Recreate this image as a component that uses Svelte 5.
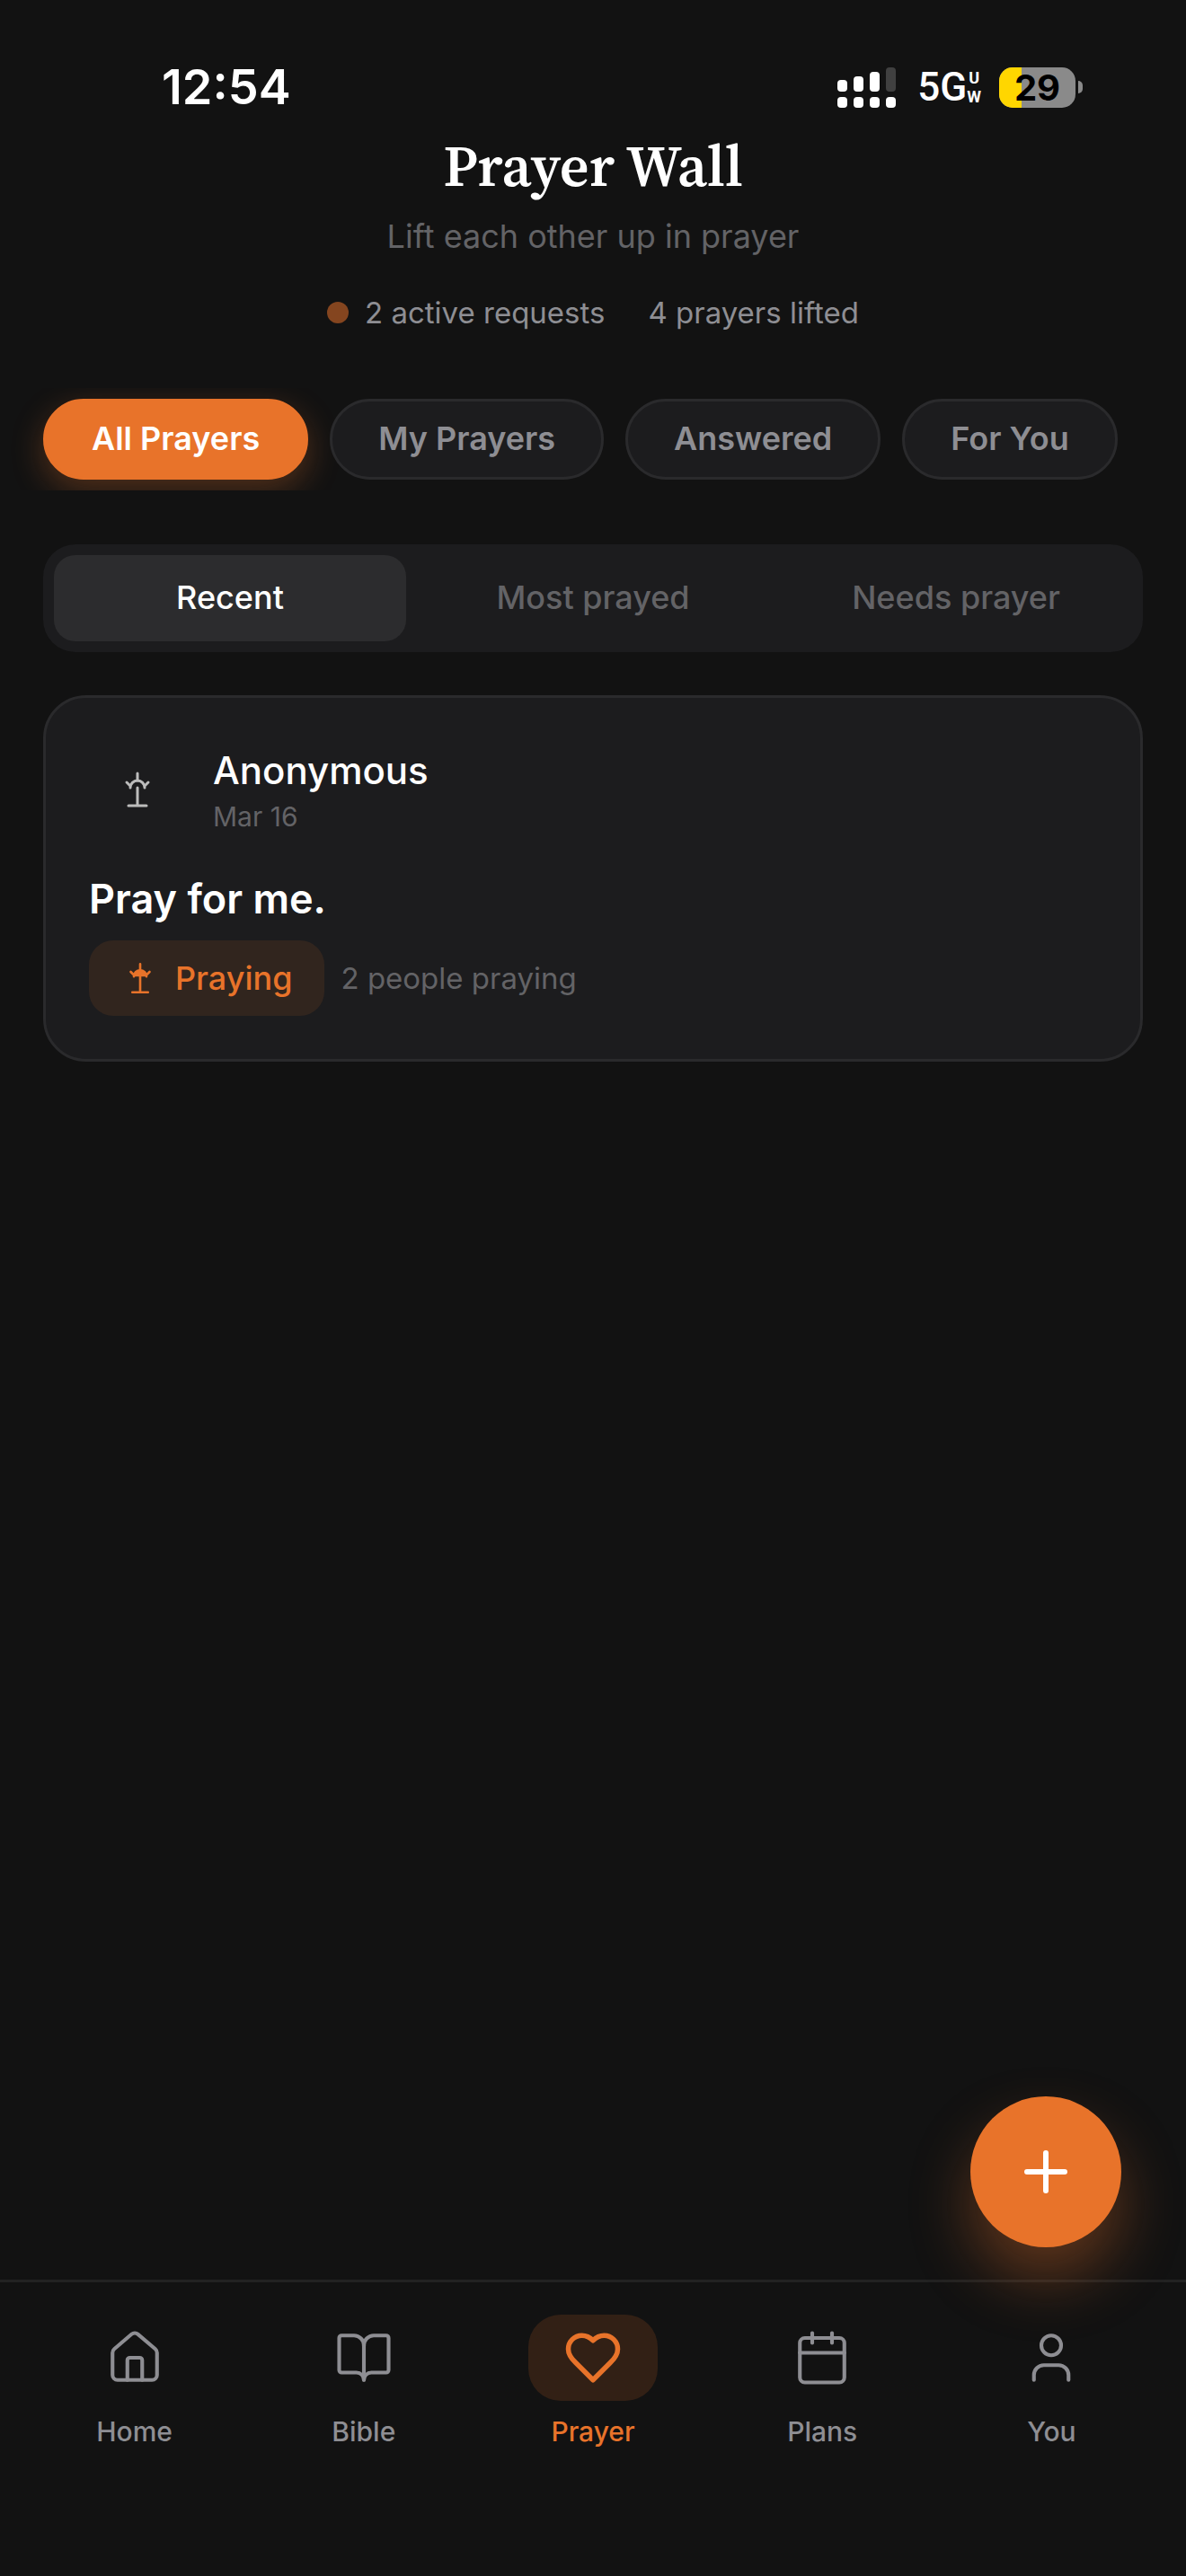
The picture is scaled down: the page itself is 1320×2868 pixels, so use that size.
<script lang="ts">
	type Tab = { id: string; label: string; paths: string[] };

	const filters = ['All Prayers', 'My Prayers', 'Answered', 'For You'];
	const sorts = ['Recent', 'Most prayed', 'Needs prayer'];

	const tabs: Tab[] = [
		{
			id: 'home',
			label: 'Home',
			paths: [
				'M15 21v-8a1 1 0 0 0-1-1h-4a1 1 0 0 0-1 1v8',
				'M3 10a2 2 0 0 1 .709-1.528l7-5.999a2 2 0 0 1 2.582 0l7 5.999A2 2 0 0 1 21 10v9a2 2 0 0 1-2 2H5a2 2 0 0 1-2-2z'
			]
		},
		{
			id: 'bible',
			label: 'Bible',
			paths: [
				'M12 7v14',
				'M3 18a1 1 0 0 1-1-1V4a1 1 0 0 1 1-1h5a4 4 0 0 1 4 4 4 4 0 0 1 4-4h5a1 1 0 0 1 1 1v13a1 1 0 0 1-1 1h-6a3 3 0 0 0-3 3 3 3 0 0 0-3-3z'
			]
		},
		{
			id: 'prayer',
			label: 'Prayer',
			paths: [
				'M19 14c1.49-1.46 3-3.21 3-5.5A5.5 5.5 0 0 0 16.5 3c-1.76 0-3 .5-4.5 2-1.5-1.5-2.74-2-4.5-2A5.5 5.5 0 0 0 2 8.5c0 2.3 1.5 4.05 3 5.5l7 7z'
			]
		},
		{
			id: 'plans',
			label: 'Plans',
			paths: [
				'M8 2v4',
				'M16 2v4',
				'M5 4h14a2 2 0 0 1 2 2v14a2 2 0 0 1-2 2H5a2 2 0 0 1-2-2V6a2 2 0 0 1 2-2z',
				'M3 10h18'
			]
		},
		{
			id: 'you',
			label: 'You',
			paths: [
				'M19 21v-2a4 4 0 0 0-4-4H9a4 4 0 0 0-4 4v2',
				'M12 3a4 4 0 1 0 0 8 4 4 0 0 0 0-8z'
			]
		}
	];

	const battery = 29;

	let filter = $state('All Prayers');
	let sort = $state('Recent');
	let current = $state('prayer');
	let praying = $state(true);

	const people = $derived(praying ? 2 : 1);
</script>

{#snippet prayerIcon(filled: boolean)}
	<svg class="prayer-icon" viewBox="0 0 24 24" aria-hidden="true">
		<path d="M12 3v4M6 8l2 2M18 8l-2 2M12 11v10M7 21h10" />
		<path d="M8 11a4 4 0 0 1 8 0" fill={filled ? 'currentColor' : 'none'} />
	</svg>
{/snippet}

<div class="screen">
	<div class="status-bar">
		<time class="clock">12:54</time>
		<div class="indicators">
			<svg class="signal" viewBox="0 0 65 45" aria-hidden="true">
				<rect x="0" y="14" width="11" height="13" rx="4" />
				<rect x="18" y="10" width="11" height="17" rx="4" />
				<rect x="36" y="5" width="11" height="22" rx="4" />
				<rect class="dim" x="54" y="0" width="11" height="27" rx="4" />
				<rect x="0" y="33" width="11" height="12" rx="4" />
				<rect x="18" y="33" width="11" height="12" rx="4" />
				<rect x="36" y="33" width="11" height="12" rx="4" />
				<rect x="54" y="33" width="11" height="12" rx="4" />
			</svg>
			<div class="network">
				<span>5G</span>
				<span class="band"><span>U</span><span>W</span></span>
			</div>
			<div class="battery">
				<div class="battery-body">
					<div class="battery-level" style:width={`${battery}%`}></div>
					<span class="battery-text">{battery}</span>
				</div>
				<div class="battery-cap"></div>
			</div>
		</div>
	</div>

	<header class="heading">
		<h1>Prayer Wall</h1>
		<p class="subtitle">Lift each other up in prayer</p>
		<div class="stats">
			<span class="stat"><i class="dot"></i>2 active requests</span>
			<span class="stat">4 prayers lifted</span>
		</div>
	</header>

	<div class="filters">
		{#each filters as name}
			<button class="chip" class:active={filter === name} onclick={() => (filter = name)}>
				{name}
			</button>
		{/each}
	</div>

	<main>
		<div class="sorts">
			{#each sorts as name}
				<button class="sort" class:active={sort === name} onclick={() => (sort = name)}>
					{name}
				</button>
			{/each}
		</div>

		<article class="card">
			<div class="author">
				<div class="avatar">{@render prayerIcon(false)}</div>
				<div>
					<div class="name">Anonymous</div>
					<div class="date">Mar 16</div>
				</div>
			</div>
			<h2>Pray for me.</h2>
			<div class="actions">
				<button class="pray" aria-pressed={praying} onclick={() => (praying = !praying)}>
					{@render prayerIcon(praying)}
					Praying
				</button>
				<span class="people">{people} people praying</span>
			</div>
		</article>
	</main>

	<div class="dock">
		<nav>
			{#each tabs as tab (tab.id)}
				<a
					href={`#${tab.id}`}
					class="tab"
					class:active={current === tab.id}
					onclick={() => (current = tab.id)}
				>
					<span class="pill">
						<svg viewBox="0 0 24 24" aria-hidden="true">
							{#each tab.paths as d}
								<path {d} />
							{/each}
						</svg>
					</span>
					<span class="tab-label">{tab.label}</span>
				</a>
			{/each}
		</nav>
		<button class="fab" aria-label="New prayer">
			<svg viewBox="0 0 24 24" aria-hidden="true"><path d="M5 12h14M12 5v14" /></svg>
		</button>
	</div>
</div>

<style>
	:global(body) {
		background: #121212;
	}

	.screen {
		--orange: #e8732a;
		--surface: #1c1c1e;
		--line: #2a2a2c;
		--text: #fff;
		--soft: #8e8e93;
		--muted: #636366;

		display: flex;
		flex-direction: column;
		min-height: 100vh;
		background: #121212;
		color: var(--text);
		font-family: Inter, 'Liberation Sans', sans-serif;
	}

	button {
		border: 0;
		margin: 0;
		font-family: inherit;
		cursor: pointer;
	}

	svg {
		display: block;
		flex: none;
		fill: none;
		stroke: currentColor;
		stroke-linecap: round;
		stroke-linejoin: round;
	}

	h1,
	h2,
	p {
		margin: 0;
	}

	.status-bar {
		display: flex;
		justify-content: space-between;
		align-items: center;
		padding: 72px 115px 0 180px;
	}

	.clock {
		font-size: 54px;
		font-weight: 600;
		line-height: 50px;
	}

	.indicators {
		display: flex;
		align-items: center;
	}

	.signal {
		width: 65px;
		height: 45px;
		fill: #fff;
		stroke: none;
	}

	.signal .dim {
		fill: #404040;
	}

	.network {
		display: flex;
		align-items: center;
		margin: 0 20px 0 24px;
		font-family: Roboto, sans-serif;
		font-size: 44px;
		font-weight: 500;
		line-height: 50px;
	}

	.band {
		display: flex;
		flex-direction: column;
		align-items: center;
		font-size: 18px;
		font-weight: 700;
		line-height: 21px;
	}

	.battery {
		display: flex;
		align-items: center;
		gap: 3px;
	}

	.battery-body {
		position: relative;
		display: flex;
		justify-content: center;
		width: 85px;
		border-radius: 15px;
		background: #8a8a8a;
	}

	.battery-level {
		position: absolute;
		inset: 0 auto 0 0;
		border-radius: 15px 0 0 15px;
		background: #ffd600;
	}

	.battery-text {
		position: relative;
		color: #000;
		font-size: 40px;
		font-weight: 700;
		line-height: 45px;
	}

	.battery-cap {
		width: 5px;
		height: 14px;
		border-radius: 0 6px 6px 0;
		background: #8a8a8a;
	}

	.heading {
		display: flex;
		flex-direction: column;
		align-items: center;
		padding-top: 27px;
	}

	h1 {
		font-family: 'Source Serif 4', 'Liberation Serif', serif;
		font-size: 64px;
		font-weight: 600;
		line-height: 72px;
	}

	.subtitle {
		margin-top: 18px;
		color: var(--muted);
		font-size: 36px;
		line-height: 48px;
	}

	.stats {
		display: flex;
		gap: 48px;
		margin-top: 41px;
		color: var(--soft);
		font-size: 33px;
		line-height: 40px;
	}

	.stat {
		display: flex;
		align-items: center;
		gap: 18px;
	}

	.dot {
		width: 24px;
		height: 24px;
		border-radius: 50%;
		background: #84451f;
	}

	.filters {
		display: flex;
		gap: 24px;
		margin-top: 64px;
		padding: 12px 48px;
		overflow: hidden;
	}

	.chip {
		flex: none;
		padding: 17px 51px 19px;
		border: 3px solid var(--line);
		border-radius: 45px;
		background: var(--surface);
		color: var(--soft);
		font-size: 36px;
		font-weight: 600;
		line-height: 48px;
	}

	.chip.active {
		border-color: var(--orange);
		background: var(--orange);
		box-shadow: 0 12px 36px rgba(232, 115, 42, 0.3);
		color: #fff;
	}

	main {
		flex: 1;
		padding: 60px 48px;
	}

	.sorts {
		display: grid;
		grid-template-columns: repeat(3, 1fr);
		gap: 12px;
		padding: 12px;
		border-radius: 36px;
		background: var(--surface);
	}

	.sort {
		padding: 23px 0 25px;
		border-radius: 24px;
		background: transparent;
		color: var(--muted);
		font-size: 36px;
		font-weight: 500;
		line-height: 48px;
	}

	.sort.active {
		background: #2c2c2e;
		color: #fff;
	}

	.card {
		margin-top: 48px;
		padding: 48px;
		border: 3px solid var(--line);
		border-radius: 48px;
		background: var(--surface);
	}

	.author {
		display: flex;
		align-items: center;
		gap: 30px;
	}

	.avatar {
		display: grid;
		place-items: center;
		width: 108px;
		height: 108px;
		color: #bcbcbc;
	}

	.prayer-icon {
		width: 42px;
		height: 42px;
		stroke-width: 1.5;
	}

	.avatar .prayer-icon {
		width: 48px;
		height: 48px;
	}

	.name {
		font-size: 42px;
		font-weight: 500;
		line-height: 60px;
	}

	.date {
		color: var(--muted);
		font-size: 30px;
		line-height: 42px;
	}

	h2 {
		margin-top: 36px;
		font-size: 45px;
		font-weight: 600;
		line-height: 63px;
	}

	.actions {
		display: flex;
		align-items: center;
		gap: 18px;
		margin-top: 15px;
	}

	.pray {
		display: flex;
		align-items: center;
		gap: 18px;
		padding: 18px 36px;
		border-radius: 27px;
		background: rgba(232, 115, 42, 0.1);
		color: var(--orange);
		font-size: 36px;
		font-weight: 500;
		line-height: 48px;
	}

	.people {
		color: var(--muted);
		font-size: 33px;
		line-height: 40px;
	}

	.dock {
		position: relative;
	}

	nav {
		display: grid;
		grid-template-columns: repeat(5, 1fr);
		padding: 36px 22px 143px;
		border-top: 3px solid #222;
	}

	.tab {
		display: flex;
		flex-direction: column;
		align-items: center;
		gap: 16px;
		color: var(--soft);
		text-decoration: none;
	}

	.pill {
		display: grid;
		place-items: center;
		width: 144px;
		height: 96px;
		border-radius: 36px;
	}

	.pill svg {
		width: 66px;
		height: 66px;
		stroke-width: 1.5;
	}

	.tab-label {
		font-size: 30px;
		font-weight: 500;
		line-height: 36px;
	}

	.tab.active {
		color: var(--orange);
	}

	.tab.active .pill {
		background: rgba(232, 115, 42, 0.15);
	}

	.tab.active svg {
		stroke-width: 2;
	}

	.fab {
		position: absolute;
		right: 72px;
		bottom: 100%;
		display: grid;
		place-items: center;
		width: 168px;
		height: 168px;
		margin-bottom: 36px;
		padding: 0;
		border-radius: 50%;
		background: var(--orange);
		box-shadow: 0 36px 66px rgba(232, 115, 42, 0.35);
		color: #fff;
	}

	.fab svg {
		width: 72px;
		height: 72px;
		stroke-width: 2;
	}
</style>
